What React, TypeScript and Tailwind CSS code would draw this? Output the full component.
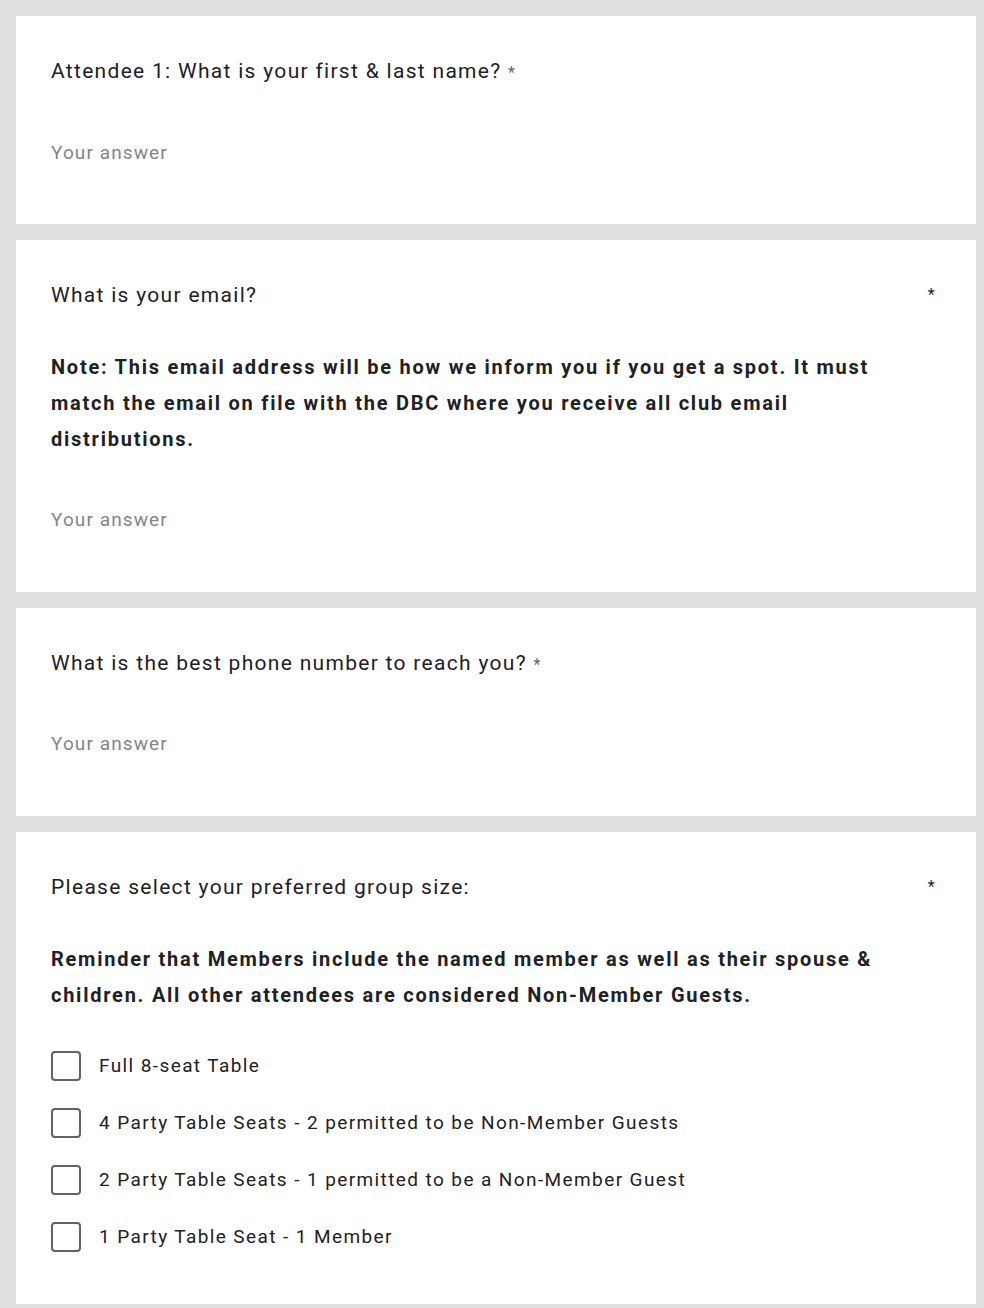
import React from "react";

const font = { fontFamily: "Roboto, 'Noto Sans', Arial, sans-serif" };

function Card({ children, pb = "pb-[58px]" }: { children: React.ReactNode; pb?: string }) {
  return (
    <div className={`bg-white w-[960px] pl-[35px] pr-[40px] pt-[40px] ${pb}`}>
      {children}
    </div>
  );
}

function Title({ text, right }: { text: string; right?: boolean }) {
  if (right) {
    return (
      <div className="flex justify-between h-[30px] text-[21px] leading-[30px] tracking-[1.3px] text-[#202124]">
        <span>{text}</span>
        <span className="text-[16px] leading-[30px] text-[#202124]">*</span>
      </div>
    );
  }
  return (
    <div className="h-[30px] text-[21px] leading-[30px] tracking-[1.3px] text-[#202124]">
      {text} <span className="text-[16px] leading-none text-[#5f6368]">*</span>
    </div>
  );
}

function Answer({ mt }: { mt: string }) {
  return (
    <div className={`${mt} text-[19px] leading-[30px] tracking-[1.1px] text-[#80868b]`}>Your answer</div>
  );
}

export default function App() {
  const options = [
    "Full 8-seat Table",
    "4 Party Table Seats - 2 permitted to be Non-Member Guests",
    "2 Party Table Seats - 1 permitted to be a Non-Member Guest",
    "1 Party Table Seat - 1 Member",
  ];
  return (
    <div className="min-h-[1308px] bg-[#e0e0e0] pl-[16px] pt-[16px] flex flex-col gap-[16px]" style={font}>
      <Card pb="pb-[56px]">
        <Title text="Attendee 1: What is your first & last name?" />
        <Answer mt="mt-[52px]" />
      </Card>
      <Card pb="pb-[57px]">
        <Title text="What is your email?" right />
        <div className="mt-[39px] pr-[20px] text-[20px] leading-[36px] tracking-[1.75px] font-bold text-[#202124]">
          Note: This email address will be how we inform you if you get a spot. It must match the email on file with the DBC where you receive all club email distributions.
        </div>
        <Answer mt="mt-[48px]" />
      </Card>
      <Card pb="pb-[57px]">
        <Title text="What is the best phone number to reach you?" />
        <Answer mt="mt-[51px]" />
      </Card>
      <Card pb="pb-[39px]">
        <Title text="Please select your preferred group size:" right />
        <div className="mt-[39px] text-[20px] leading-[36px] tracking-[1.75px] font-bold text-[#202124]">
          Reminder that Members include the named member as well as their spouse &amp; children. All other attendees are considered Non-Member Guests.
        </div>
        <div className="mt-[24px] flex flex-col">
          {options.map((o) => (
            <div key={o} className="h-[57px] flex items-center gap-[18px]">
              <div className="w-[30px] h-[30px] border-2 border-[#5f6368] rounded-[4px] shrink-0" />
              <span className="text-[19px] tracking-[1.4px] text-[#202124] translate-y-[1px]">{o}</span>
            </div>
          ))}
        </div>
      </Card>
    </div>
  );
}
